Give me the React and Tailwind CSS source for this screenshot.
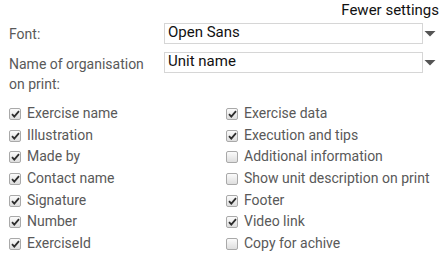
import React from 'react';

const leftOptions = [
  { label: 'Exercise name', checked: true },
  { label: 'Illustration', checked: true },
  { label: 'Made by', checked: true },
  { label: 'Contact name', checked: true },
  { label: 'Signature', checked: true },
  { label: 'Number', checked: true },
  { label: 'ExerciseId', checked: true },
];

const rightOptions = [
  { label: 'Exercise data', checked: true },
  { label: 'Execution and tips', checked: true },
  { label: 'Additional information', checked: false },
  { label: 'Show unit description on print', checked: false },
  { label: 'Footer', checked: true },
  { label: 'Video link', checked: true },
  { label: 'Copy for achive', checked: false },
];

const Check = ({ label, checked }) => (
  <div className="flex items-center h-[21.7px] leading-[21.7px]">
    <span className="w-[12px] h-[12px] shrink-0 rounded-[2px] border border-[#a9a9a9] bg-gradient-to-b from-[#fbfbfb] to-[#dedede] flex items-center justify-center">
      {checked && (
        <svg width="9" height="8" viewBox="0 0 9 8">
          <path d="M1 4.2 L3.3 6.6 L8 1.2" fill="none" stroke="#2e2e2e" strokeWidth="1.8" />
        </svg>
      )}
    </span>
    <span className="ml-[6px] text-[14px] text-[#595959] whitespace-nowrap">{label}</span>
  </div>
);

const Select = ({ value }) => (
  <div className="flex">
    <div className="w-[259px] h-[21px] border border-[#d6d6d6] bg-white pl-[3px] text-[15px] leading-[17px] text-[#111]">
      {value}
    </div>
    <svg width="12" height="21" viewBox="0 0 12 21" className="ml-[1px]">
      <path d="M0.5 8 L11.5 8 L6 13.5 Z" fill="#555" />
    </svg>
  </div>
);

const App = () => {
  return (
    <div className="w-[447px] h-[280px] bg-white overflow-hidden font-['Roboto',sans-serif] pl-[9px]">
      <div className="pt-[1px] pr-[8px] text-right text-[15px] leading-[18px] text-[#111]">
        Fewer settings
      </div>

      <div className="flex mt-[4px]">
        <div className="w-[155px] pt-[1px] text-[14px] leading-[20px] text-[#595959]">Font:</div>
        <Select value="Open Sans" />
      </div>

      <div className="flex mt-[8px]">
        <div className="w-[155px] pt-[2px] pr-[10px] text-[14px] leading-[20px] text-[#595959]">
          Name of organisation on print:
        </div>
        <Select value="Unit name" />
      </div>

      <div className="grid grid-cols-[217px_1fr] mt-[9px]">
        <div>
          {leftOptions.map((o) => (
            <Check key={o.label} {...o} />
          ))}
        </div>
        <div>
          {rightOptions.map((o) => (
            <Check key={o.label} {...o} />
          ))}
        </div>
      </div>
    </div>
  );
};

export default App;
